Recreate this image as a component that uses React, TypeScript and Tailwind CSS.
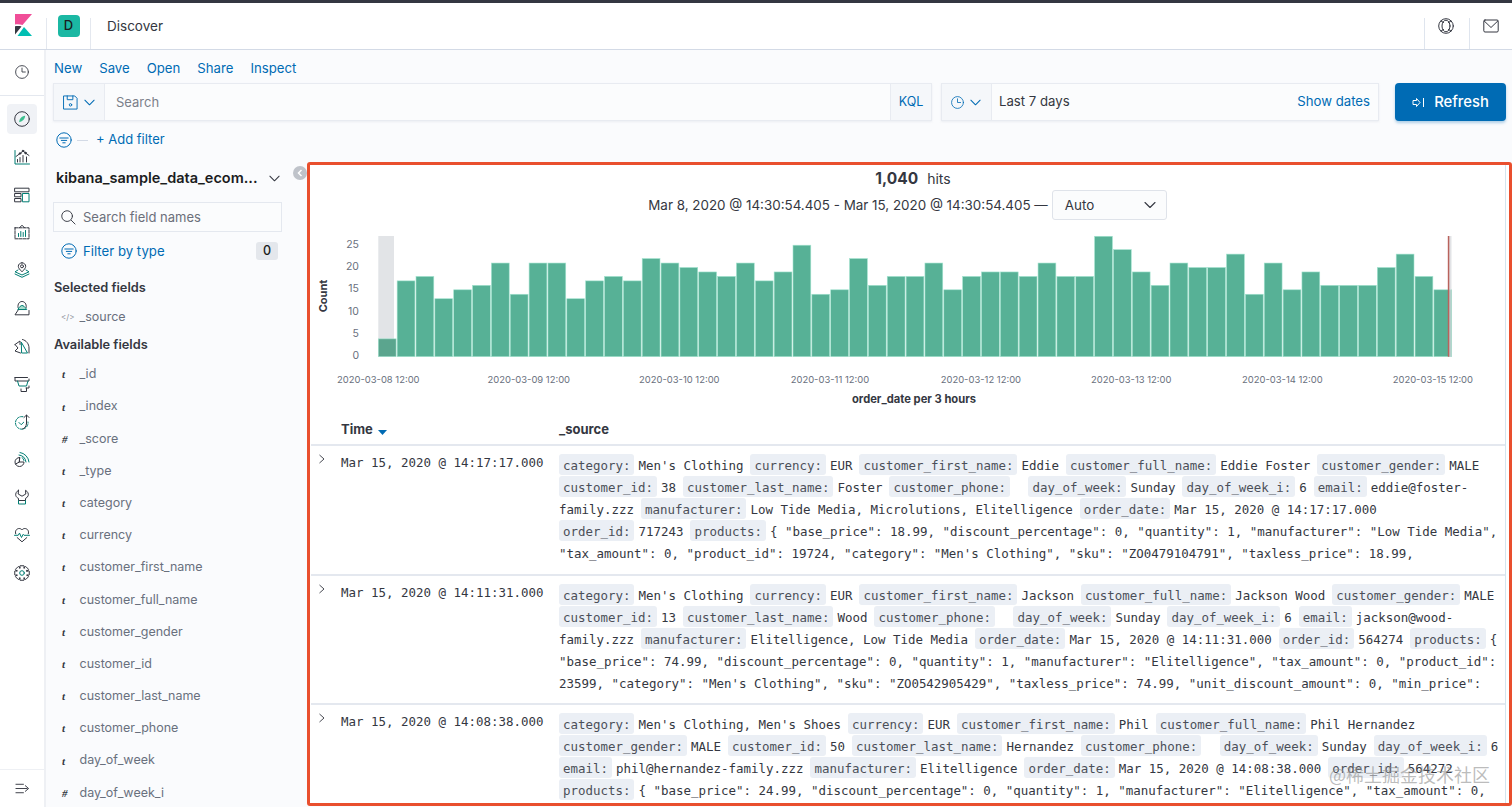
import React from 'react';

const dark = '#343741';
const teal = '#017D73';

const counts = [
  4, 17, 18, 13, 15, 16, 21, 14, 21, 21, 13, 17, 18, 17, 22, 21, 20, 19, 18, 21, 17, 19, 25, 14, 15, 22, 16, 18, 18, 21,
  15, 18, 19, 19, 18, 21, 18, 18, 27, 24, 19, 16, 21, 20, 20, 23, 14, 21, 15, 19, 16, 16, 16, 20, 23, 18, 15,
];

const xLabels = [
  ['2020-03-08 12:00', 337],
  ['2020-03-09 12:00', 487.5],
  ['2020-03-10 12:00', 639],
  ['2020-03-11 12:00', 790.7],
  ['2020-03-12 12:00', 940.7],
  ['2020-03-13 12:00', 1091],
  ['2020-03-14 12:00', 1242],
  ['2020-03-15 12:00', 1392.7],
] as const;

const yTicks = [
  [25, 244],
  [20, 266.5],
  [15, 288.7],
  [10, 311],
  [5, 333.5],
  [0, 355.7],
] as const;

const fields = [
  ['t', '_id'],
  ['t', '_index'],
  ['#', '_score'],
  ['t', '_type'],
  ['t', 'category'],
  ['t', 'currency'],
  ['t', 'customer_first_name'],
  ['t', 'customer_full_name'],
  ['t', 'customer_gender'],
  ['t', 'customer_id'],
  ['t', 'customer_last_name'],
  ['t', 'customer_phone'],
  ['t', 'day_of_week'],
  ['#', 'day_of_week_i'],
];

// each segment: [key, value]; an empty key is plain text
type Seg = [string, string];

const rows: { time: string; height: string; lines: Seg[][] }[] = [
  {
    time: 'Mar 15, 2020 @ 14:17:17.000',
    height: 'h-[130px]',
    lines: [
      [['category:', "Men's Clothing"], ['currency:', 'EUR'], ['customer_first_name:', 'Eddie'], ['customer_full_name:', 'Eddie Foster'], ['customer_gender:', 'MALE']],
      [['customer_id:', '38'], ['customer_last_name:', 'Foster'], ['customer_phone:', ' '], ['day_of_week:', 'Sunday'], ['day_of_week_i:', '6'], ['email:', 'eddie@foster-']],
      [['', 'family.zzz'], ['manufacturer:', 'Low Tide Media, Microlutions, Elitelligence'], ['order_date:', 'Mar 15, 2020 @ 14:17:17.000']],
      [['order_id:', '717243'], ['products:', '{ "base_price": 18.99, "discount_percentage": 0, "quantity": 1, "manufacturer": "Low Tide Media",']],
      [['', '"tax_amount": 0, "product_id": 19724, "category": "Men\'s Clothing", "sku": "ZO0479104791", "taxless_price": 18.99,']],
    ],
  },
  {
    time: 'Mar 15, 2020 @ 14:11:31.000',
    height: 'h-[129px]',
    lines: [
      [['category:', "Men's Clothing"], ['currency:', 'EUR'], ['customer_first_name:', 'Jackson'], ['customer_full_name:', 'Jackson Wood'], ['customer_gender:', 'MALE']],
      [['customer_id:', '13'], ['customer_last_name:', 'Wood'], ['customer_phone:', ' '], ['day_of_week:', 'Sunday'], ['day_of_week_i:', '6'], ['email:', 'jackson@wood-']],
      [['', 'family.zzz'], ['manufacturer:', 'Elitelligence, Low Tide Media'], ['order_date:', 'Mar 15, 2020 @ 14:11:31.000'], ['order_id:', '564274'], ['products:', '{']],
      [['', '"base_price": 74.99, "discount_percentage": 0, "quantity": 1, "manufacturer": "Elitelligence", "tax_amount": 0, "product_id":']],
      [['', '23599, "category": "Men\'s Clothing", "sku": "ZO0542905429", "taxless_price": 74.99, "unit_discount_amount": 0, "min_price":']],
    ],
  },
  {
    time: 'Mar 15, 2020 @ 14:08:38.000',
    height: 'h-[110px]',
    lines: [
      [['category:', "Men's Clothing, Men's Shoes"], ['currency:', 'EUR'], ['customer_first_name:', 'Phil'], ['customer_full_name:', 'Phil Hernandez']],
      [['customer_gender:', 'MALE'], ['customer_id:', '50'], ['customer_last_name:', 'Hernandez'], ['customer_phone:', ' '], ['day_of_week:', 'Sunday'], ['day_of_week_i:', '6']],
      [['email:', 'phil@hernandez-family.zzz'], ['manufacturer:', 'Elitelligence'], ['order_date:', 'Mar 15, 2020 @ 14:08:38.000'], ['order_id:', '564272']],
      [['products:', '{ "base_price": 24.99, "discount_percentage": 0, "quantity": 1, "manufacturer": "Elitelligence", "tax_amount": 0,']],
    ],
  },
];

const Ico: React.FC<{ size?: number; children: React.ReactNode; color?: string }> = ({ size = 17, children, color = dark }) => (
  <svg width={size} height={size} viewBox="0 0 16 16" fill="none" stroke={color} strokeWidth={1} strokeLinecap="round" strokeLinejoin="round">
    {children}
  </svg>
);

const Chevron: React.FC<{ size?: number; color?: string }> = ({ size = 14, color = dark }) => (
  <svg width={size} height={size} viewBox="0 0 14 14" fill="none" stroke={color} strokeWidth={1.1} strokeLinecap="round" strokeLinejoin="round">
    <path d="M2 4.5 7 9.5 12 4.5" />
  </svg>
);

const FilterIcon: React.FC = () => (
  <Ico size={16} color="#006BB4">
    <circle cx="8" cy="8" r="7.2" />
    <path d="M3.8 6h8.4M5.3 8.4h5.4M6.8 10.8h2.4" />
  </Ico>
);

// eight-tooth gear outline for the management icon
const gearPath = (() => {
  const pts: string[] = [];
  for (let i = 0; i < 8; i++) {
    const a = (i * Math.PI) / 4;
    [
      [-0.5, 5.4],
      [-0.26, 7.5],
      [0.26, 7.5],
      [0.5, 5.4],
    ].forEach(([da, r]) => {
      pts.push(`${(8 + r * Math.cos(a + da)).toFixed(2)} ${(8 + r * Math.sin(a + da)).toFixed(2)}`);
    });
  }
  return `M${pts.join('L')}Z`;
})();

const railIcons: React.ReactNode[] = [
  <>
    <circle cx="8" cy="8" r="7.3" />
    <path d="M11.2 4.800C11 7.800 9 10.500 5.200 11.200 5.200 8 7.500 5.200 11.200 4.800Z" fill="#3ebf8f" stroke="none" />
  </>,
  <>
    <path d="M1 1.500V15h14.500" stroke={teal} />
    <path d="M2 7.500 6 4.500 9 2l2.500 2 3.500 2.500" />
    <circle cx="6" cy="4.500" r=".8" fill={dark} />
    <circle cx="9" cy="2" r=".8" fill={dark} />
    <circle cx="11.500" cy="4" r=".8" fill={dark} />
    <path d="M6 8.500V13M9 6.500V13M12.500 8V13M3.500 10.500V13" />
  </>,
  <>
    <rect x="1" y="1.200" width="14" height="3.600" />
    <rect x="1" y="6.500" width="6" height="3.300" />
    <rect x="1" y="11.500" width="6" height="3.300" />
    <rect x="8.800" y="6.500" width="6.200" height="8.300" stroke={teal} />
  </>,
  <>
    <path d="M5.500 3.800 8 1.200l2.500 2.600" />
    <path d="M1 3.800h14v11H1Z" strokeDasharray="3 1" />
    <path d="M4.500 12.500V9.500M6.800 12.500V7.500M9.200 12.500V8.500M11.500 12.500V6.500" stroke={teal} />
  </>,
  <>
    <path d="M8 .8C5.800.8 4.300 2.500 4.300 4.300 4.300 6.200 6 7.600 8 9.800c2-2.200 3.700-3.600 3.700-5.500C11.700 2.500 10.200.8 8 .8Z" />
    <circle cx="8" cy="4.300" r="1.500" />
    <path d="M4 8 1 9.800 8 13l7-3.200L12 8M1 12l7 3.300 7-3.300" stroke={teal} />
  </>,
  <>
    <path d="M4 7.500C3.500 3.800 5.500 1.500 8 1.500s4.700 2.200 4.200 6M4.500 9.500 1 14.800h14V10.500" />
    <path d="M4 9.200C5.500 6.500 7 5.500 8 5.500c1.200 0 3 1.200 4.500 3.700Z" fill="#a7dccb" stroke={teal} />
  </>,
  <>
    <path d="M1 6.500 6 3v3.500M1 6.500 4 10 1 13l5.500 2" />
    <path d="M8.500 1.500c3.800.8 6.500 4.500 6.500 8.500v5" />
    <path d="M7.500 4.500 13.500 15H8Z" stroke={teal} />
  </>,
  <>
    <path d="M1 1.500h12.500" />
    <path d="M1 1.500V5h14V3" />
    <path d="M3.500 5 5 10h7.500L14 5" stroke={teal} />
    <path d="M15 10v2h-3M7 13v2.500h5.500V12" />
  </>,
  <>
    <path d="M9 2.700a6.300 6.300 0 1 0 5 5.300" stroke={teal} strokeDasharray="2.400 1.400" />
    <path d="m5 8.500 2.200 2.200 2.500-2.500" stroke={teal} />
    <path d="M12.500 9.500V1.200M10 3.500l2.500-2.500 2.500 2.500M12.500 9.500c0 3-2 5-4 5.500" />
  </>,
  <>
    <path d="M5.500 6.500a4.500 4.500 0 1 0 4.500 4.500H5.500Z" />
    <path d="M5.500 6.500V11L1.500 13" />
    <path d="M5 4a8 8 0 0 1 7 7M6 1.500a10.500 10.500 0 0 1 9 9.500M8 6.500a4 4 0 0 1 2 3" stroke={teal} />
  </>,
  <>
    <path d="M4.500 1.300 4.200 5 8 7.200 11.800 5l-.3-3.700c2.300 1.200 3.200 3.500 2.700 5.300-.4 1.300-1.500 2.300-2.700 2.800v2.100H4.500V9.400C3.300 8.900 2.200 7.900 1.800 6.600 1.300 4.800 2.200 2.500 4.500 1.300Z" />
    <path d="M4.500 11.600v3.400h7v-3.400" stroke={teal} />
  </>,
  <>
    <path d="M1.700 6.800C.6 3.800 2.800 1.500 5.200 1.500c1.200 0 2.200.6 2.800 1.500.6-.9 1.600-1.500 2.800-1.500 2.400 0 4.600 2.300 3.500 5.300M3.200 10.600 8 14.800l4.800-4.200" />
    <path d="M.5 8.300h3.700l1.300-2.200 2 4.400 1.700-3.200.9 1h5.400" stroke={teal} />
  </>,
  <>
    <path d={gearPath} />
    <circle cx="8" cy="8" r="2.300" stroke={teal} />
  </>,
];

const RailButton: React.FC<{ active?: boolean; children: React.ReactNode }> = ({ active, children }) => (
  <div className="h-[37.83px] flex items-center justify-center">
    <div className={active ? 'w-[30px] h-[30px] rounded-[4px] bg-[#f0f2f6] flex items-center justify-center' : 'w-[30px] h-[30px] flex items-center justify-center'}>
      <Ico size={16}>{children}</Ico>
    </div>
  </div>
);

const Histogram: React.FC = () => (
  <svg width="1195" height="190" viewBox="310 220 1195 190" className="shrink-0 font-['Inter',sans-serif]">
    <rect x="378.300" y="236" width="15.700" height="120.700" fill="#e2e4e7" />
    {counts.map((c, i) => (
      <rect
        key={i}
        x={378.3 + i * 18.85}
        y={356.7 - c * 4.46}
        width={17.8}
        height={c * 4.46}
        fill={i === 0 ? '#5ba58e' : '#57b196'}
        stroke="#a3e3cf"
        strokeWidth={0.6}
      />
    ))}
    <rect x="1449" y="236" width="2.500" height="120.700" fill="#d8dadd" opacity={0.75} />
    <rect x="1447.800" y="236" width="1.500" height="120.700" fill="#b9625c" />
    {yTicks.map(([v, y]) => (
      <text key={v} x="359" y={y + 3.5} textAnchor="end" fontSize="10.500" fill="#69707d">
        {v}
      </text>
    ))}
    {xLabels.map(([t, x]) => (
      <text key={t} x={x} y="382.500" fontSize="9.450" fill="#69707d">
        {t}
      </text>
    ))}
    <text x="914" y="403" textAnchor="middle" fontSize="11.200" fontWeight="700" fill={dark}>
      order_date per 3 hours
    </text>
    <text x="327" y="296" textAnchor="middle" fontSize="11" fontWeight="700" fill={dark} transform="rotate(-90 327 296)">
      Count
    </text>
  </svg>
);

const DocLine: React.FC<{ segs: Seg[] }> = ({ segs }) => (
  <div className="flex h-[22px] leading-[24px] whitespace-pre">
    {segs.map(([k, v], i) =>
      k ? (
        <span key={i} className="flex mr-[7px]">
          <span className="h-[21px] leading-[23px] px-1 mr-1 rounded-[3px] bg-[#ebeff5] text-[#4b4f59]">{k}</span>
          <span>{v}</span>
        </span>
      ) : (
        <span key={i} className="mr-[7px]">
          {v}
        </span>
      ),
    )}
  </div>
);

const App: React.FC = () => {
  return (
    <div className="w-[1512px] h-[807px] overflow-hidden flex flex-col bg-white text-[#343741] font-['Inter',sans-serif]">
      <div className="h-[3px] shrink-0 bg-[#343741]" />

      <header className="h-[47px] shrink-0 flex border-b-[1.5px] border-[#d3dae6] bg-white">
        <div className="w-[46px] shrink-0 flex justify-center pt-[11px]">
          <svg width="17" height="22" viewBox="0 0 17 22">
            <path d="M0 0H17L7.500 11C5 10.300 2.500 10.200 0 10.600Z" fill="#f04e98" />
            <path d="M0 12.300C2 11.800 4.500 11.800 6.500 12.400L0 20.500Z" fill="#343741" />
            <path d="M2.500 22 9 13 17 22Z" fill="#00bfb3" />
          </svg>
        </div>
        <div className="w-[45px] shrink-0 mt-[15px] border-l border-r border-[#e4e8ef] flex justify-center">
          <div className="w-[22px] h-[22px] -mt-[3px] rounded-[4px] bg-[#1bb8a3] flex items-center justify-center text-[13px] font-medium text-[#1a1c21]">D</div>
        </div>
        <div className="pl-4 pt-[14px] text-[13.500px] leading-[18px]">Discover</div>
        <div className="ml-auto flex">
          <div className="w-[45px] mt-[15px] pr-[3px] border-l border-[#dfe5ee] flex justify-center">
            <Ico size={16}>
              <circle cx="8" cy="8" r="7.300" />
              <ellipse cx="8" cy="8" rx="4" ry="5.800" />
              <path d="M3 3l2.500 1.500M13 3l-2.500 1.500M3 13l2.500-1.500M13 13l-2.500-1.500" />
            </Ico>
          </div>
          <div className="w-[43px] mt-[15px] border-l border-[#dfe5ee] flex justify-center">
            <Ico size={16}>
              <rect x="0.800" y="2" width="14.400" height="12" rx="1.200" />
              <path d="M1.200 3 8 9.500 14.800 3" />
            </Ico>
          </div>
        </div>
      </header>

      <div className="flex-1 flex min-h-0">
        <nav className="w-[46px] shrink-0 flex flex-col bg-white border-r-2 border-[#eef0f4]">
          <div className="h-[46px] shrink-0 pb-[2px] flex items-center justify-center border-b-[1.5px] border-[#e4e8ef]">
            <Ico size={14}>
              <circle cx="8" cy="8" r="7.300" />
              <path d="M8 3.500V8h3.800" />
            </Ico>
          </div>
          <div className="pt-[4px]">
            {railIcons.map((icon, i) => (
              <RailButton key={i} active={i === 0}>
                {icon}
              </RailButton>
            ))}
          </div>
          <div className="mt-auto h-[38px] shrink-0 flex items-center justify-center border-t border-[#eef0f4]">
            <Ico size={15}>
              <path d="M1 3.500h8M1 8h12M1 12.500h8M11 5l3.500 3-3.500 3" />
            </Ico>
          </div>
        </nav>

        <main className="flex-1 min-w-0 flex flex-col bg-[#fafbfd]">
          <div className="h-[33px] shrink-0 pl-2 pt-[9px] flex gap-[17px] text-[13.200px] leading-[18px] text-[#006bb4]">
            <span>New</span>
            <span>Save</span>
            <span>Open</span>
            <span>Share</span>
            <span>Inspect</span>
          </div>

          <div className="h-[38px] shrink-0 pl-[7px] pr-[6px] flex">
            <div className="w-[879px] flex border border-[#e8ebf1] bg-[#fbfcfd] shadow-[0_1px_2px_rgba(152,162,179,0.15)]">
              <div className="w-[51px] shrink-0 flex items-center justify-center gap-[5px] border-r border-[#e8ebf1] bg-[#f5f7fa]">
                <Ico size={15} color="#006bb4">
                  <path d="M1 1h11.500L15 3.500V15H1Z" />
                  <path d="M4.500 1v4h6V1" />
                  <circle cx="8" cy="10.500" r="1.300" />
                </Ico>
                <Chevron size={13} color="#006bb4" />
              </div>
              <div className="flex-1 pl-[11px] pt-[2px] flex items-center text-[13px] text-[#7b808a]">Search</div>
              <div className="w-[41px] shrink-0 flex items-center justify-center border-l border-[#e8ebf1] bg-[#f5f7fa] text-[12.500px] text-[#006bb4]">KQL</div>
            </div>
            <div className="ml-[9px] w-[438px] flex border border-[#e8ebf1] bg-[#fbfcfd] shadow-[0_1px_2px_rgba(152,162,179,0.15)]">
              <div className="w-[50px] shrink-0 flex items-center justify-center gap-[5px] border-r border-[#e8ebf1] bg-[#f5f7fa]">
                <Ico size={13} color="#006bb4">
                  <circle cx="8" cy="8" r="7.300" />
                  <path d="M8 3.500V8h3.800" />
                </Ico>
                <Chevron size={13} color="#006bb4" />
              </div>
              <div className="flex-1 pl-[7px] pr-2 flex items-center justify-between text-[13.200px]">
                <span>Last 7 days</span>
                <span className="text-[#006bb4]">Show dates</span>
              </div>
            </div>
            <div className="ml-4 w-[111px] rounded-[4px] bg-[#006bb4] shadow-[0_2px_3px_rgba(0,107,180,0.3)] flex items-center justify-center gap-[9px] text-white text-[14.800px] font-medium">
              <svg width="13" height="11" viewBox="0 0 13 11" fill="none" stroke="#fff" strokeWidth="1">
                <path d="M1 3.500h3.500V1.500L8 5.500l-3.500 4v-2H1ZM11.500 1v9" />
              </svg>
              Refresh
            </div>
          </div>

          <div className="h-[41px] shrink-0 pl-[10px] pb-[3px] flex items-center text-[#006bb4] text-[13px]">
            <FilterIcon />
            <span className="ml-[5px] w-[11px] h-px bg-[#d3dae6]" />
            <span className="ml-2">+ Add filter</span>
          </div>

          <div className="flex-1 min-h-0 flex relative">
            <aside className="w-[261px] shrink-0 overflow-hidden">
              <div className="mt-px h-[30px] pl-[10px] flex items-center text-[14.500px] font-semibold text-[#1a1c21]">
                <span className="w-[212px] whitespace-nowrap">kibana_sample_data_ecom...</span>
                <Chevron size={13} />
              </div>
              <div className="mt-[9px] ml-[7px] w-[229px] h-[30px] border border-[#e4e8ef] bg-[#fbfcfd] flex items-center pl-[7px] gap-[7px] text-[13px] text-[#6b6f7a]">
                <Ico size={15}>
                  <circle cx="6.500" cy="6.500" r="5.700" />
                  <path d="m11 11 4 4" />
                </Ico>
                <span className="pt-[2px]">Search field names</span>
              </div>
              <div className="mt-[10px] ml-[15px] w-[217px] h-[18px] flex items-center text-[13.200px] text-[#006bb4]">
                <FilterIcon />
                <span className="ml-[6px] pt-[2px]">Filter by type</span>
                <span className="ml-auto w-[22px] h-[18px] rounded-[3px] bg-[#e4e7ec] flex items-center justify-center text-[12.500px] font-medium text-[#1a1c21]">0</span>
              </div>
              <div className="mt-[18px] ml-2 h-5 leading-5 text-[12.800px] font-semibold">Selected fields</div>
              <div className="mt-[9px] ml-[15px] h-5 flex items-center text-[12.500px] text-[#69707d]">
                <span className="w-[18.500px] text-[8px] text-[#8b909a]">&lt;/&gt;</span>
                _source
              </div>
              <div className="mt-2 ml-2 h-5 leading-5 text-[12.800px] font-semibold">Available fields</div>
              <ul className="mt-[3.500px] ml-[16px]">
                {fields.map(([type, name]) => (
                  <li key={name} className="h-[32.2px] flex items-center text-[12.500px] text-[#69707d]">
                    <span className="w-[17.500px] text-[11px] italic font-bold text-[#343741] font-['Liberation_Serif',serif]">{type}</span>
                    {name}
                  </li>
                ))}
              </ul>
            </aside>

            <div className="absolute left-[247px] top-[4px] w-[14px] h-[14px] rounded-full bg-[#bfc3ca] flex items-center justify-center">
              <svg width="8" height="8" viewBox="0 0 8 8" fill="none" stroke="#fff" strokeWidth="1.500">
                <path d="M5.500 1 2.500 4l3 3" />
              </svg>
            </div>

            <section className="flex-1 min-w-0 mb-px relative flex flex-col bg-white border-[3px] border-[#e94f2e] rounded-[3px] overflow-hidden">
              <div className="flex-1 min-h-0 mr-[3px] border-r border-[#d5e4ee] flex flex-col overflow-hidden">
                <div className="h-[25px] shrink-0 pl-[11px] pt-[2px] flex items-center justify-center gap-[9px]">
                  <span className="text-[15.500px] font-bold">1,040</span>
                  <span className="text-[14px]">hits</span>
                </div>
                <div className="h-[30px] shrink-0 flex items-center justify-center text-[13.400px]">
                  <span className="whitespace-nowrap">Mar 8, 2020 @ 14:30:54.405 - Mar 15, 2020 @ 14:30:54.405 —</span>
                  <div className="ml-[4px] w-[115px] h-[30px] border border-[#dfe3ea] rounded-[3px] bg-[#fbfcfd] flex items-center justify-between pl-3 pr-[9px]">
                    Auto
                    <Chevron size={14} />
                  </div>
                </div>
                <Histogram />
                <div className="h-[36px] shrink-0 ml-px border-b-2 border-[#e4e8ef] grid grid-cols-[30px_218px_1fr] items-center text-[13px] font-bold pt-[6px]">
                  <span />
                  <span className="flex items-center gap-[5px]">
                    Time
                    <svg width="9" height="5" viewBox="0 0 9 5" className="mt-[4px]">
                      <path d="M0 0h9L4.500 5Z" fill="#006bb4" />
                    </svg>
                  </span>
                  <span>_source</span>
                </div>
                {rows.map((row) => (
                  <div key={row.time} className={`${row.height} shrink-0 ml-px border-b-2 last:border-b-0 border-[#e4e8ef] grid grid-cols-[30px_218px_1fr] font-['DejaVu_Sans_Mono',monospace] text-[12.460px]`}>
                    <div className="pl-[7px] pt-[7px]">
                      <svg width="8" height="12" viewBox="0 0 8 12" fill="none" stroke={dark} strokeWidth="0.900">
                        <path d="M1.500 2 6 6l-4.500 4" />
                      </svg>
                    </div>
                    <div className="pt-[7px] leading-5">{row.time}</div>
                    <div className="pt-2">
                      {row.lines.map((segs, i) => (
                        <DocLine key={i} segs={segs} />
                      ))}
                    </div>
                  </div>
                ))}
              </div>
              <div className="absolute right-[19px] bottom-[18px] text-[18px] leading-[22px] text-[#8f8f8f]/60 font-['Noto_Sans_CJK_SC',sans-serif] whitespace-nowrap">@稀土掘金技术社区</div>
            </section>
          </div>
        </main>
      </div>
    </div>
  );
};

export default App;
